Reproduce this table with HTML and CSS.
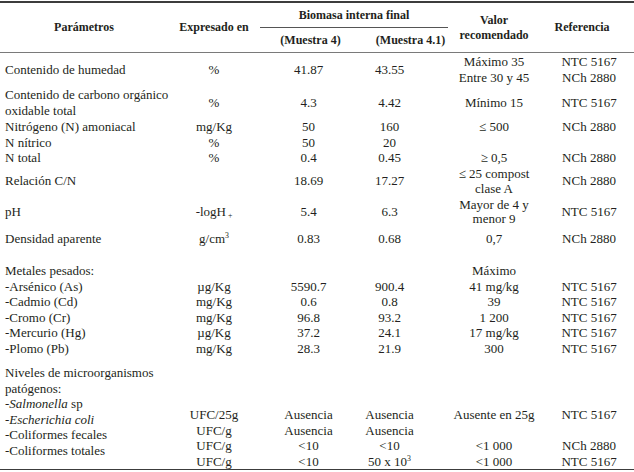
FILE: index.html
```html
<!DOCTYPE html>
<html lang="es">
<head>
<meta charset="utf-8">
<title>Tabla</title>
<link rel="stylesheet" href="styles.css">
</head>
<body>
<table class="tbl">
  <colgroup>
    <col class="c1"><col class="c2"><col class="c3"><col class="c4"><col class="c5"><col class="c6">
  </colgroup>
  <thead>
    <tr class="h1">
      <th rowspan="2" class="hp">Parámetros</th>
      <th rowspan="2">Expresado en</th>
      <th colspan="2" class="hbio">Biomasa interna final</th>
      <th rowspan="2" class="hval">Valor<br>recomendado</th>
      <th rowspan="2" class="href">Referencia</th>
    </tr>
    <tr class="h2">
      <th class="hm4">(Muestra 4)</th>
      <th class="hm41">(Muestra 4.1)</th>
    </tr>
  </thead>
  <tbody>
    <tr class="r2l">
      <td class="lbl">Contenido de humedad</td><td>%</td><td class="m4">41.87</td><td class="m41">43.55</td>
      <td class="val">Máximo 35<br>Entre 30 y 45</td><td class="ref">NTC 5167<br>NCh 2880</td>
    </tr>
    <tr class="r2l">
      <td class="lbl">Contenido de carbono orgánico<br>oxidable total</td><td>%</td><td class="m4">4.3</td><td class="m41">4.42</td>
      <td class="val">Mínimo 15</td><td class="ref">NTC 5167</td>
    </tr>
    <tr class="r1l">
      <td class="lbl">Nitrógeno (N) amoniacal</td><td>mg/Kg</td><td class="m4">50</td><td class="m41">160</td>
      <td class="val">≤ 500</td><td class="ref">NCh 2880</td>
    </tr>
    <tr class="r1l">
      <td class="lbl">N nítrico</td><td>%</td><td class="m4">50</td><td class="m41">20</td>
      <td class="val"></td><td class="ref"></td>
    </tr>
    <tr class="r1l">
      <td class="lbl">N total</td><td>%</td><td class="m4">0.4</td><td class="m41">0.45</td>
      <td class="val">≥ 0,5</td><td class="ref">NCh 2880</td>
    </tr>
    <tr class="tight">
      <td class="lbl">Relación C/N</td><td></td><td class="m4">18.69</td><td class="m41">17.27</td>
      <td class="val">≤ 25 compost<br>clase A</td><td class="ref">NCh 2880</td>
    </tr>
    <tr class="tighter">
      <td class="lbl">pH</td><td>-logH<sub>+</sub></td><td class="m4">5.4</td><td class="m41">6.3</td>
      <td class="val">Mayor de 4 y<br>menor 9</td><td class="ref">NTC 5167</td>
    </tr>
    <tr class="r1l dens">
      <td class="lbl">Densidad aparente</td><td>g/cm<sup>3</sup></td><td class="m4">0.83</td><td class="m41">0.68</td>
      <td class="val">0,7</td><td class="ref">NCh 2880</td>
    </tr>
    <tr class="r1l metal">
      <td class="lbl">Metales pesados:</td><td></td><td></td><td></td>
      <td class="val">Máximo</td><td class="ref"></td>
    </tr>
    <tr class="r1l">
      <td class="lbl">-Arsénico (As)</td><td>µg/Kg</td><td class="m4">5590.7</td><td class="m41">900.4</td>
      <td class="val">41 mg/kg</td><td class="ref">NTC 5167</td>
    </tr>
    <tr class="r1l">
      <td class="lbl">-Cadmio (Cd)</td><td>mg/Kg</td><td class="m4">0.6</td><td class="m41">0.8</td>
      <td class="val">39</td><td class="ref">NTC 5167</td>
    </tr>
    <tr class="r1l">
      <td class="lbl">-Cromo (Cr)</td><td>mg/Kg</td><td class="m4">96.8</td><td class="m41">93.2</td>
      <td class="val">1 200</td><td class="ref">NTC 5167</td>
    </tr>
    <tr class="r1l">
      <td class="lbl">-Mercurio (Hg)</td><td>µg/Kg</td><td class="m4">37.2</td><td class="m41">24.1</td>
      <td class="val">17 mg/kg</td><td class="ref">NTC 5167</td>
    </tr>
    <tr class="r1l">
      <td class="lbl">-Plomo (Pb)</td><td>mg/Kg</td><td class="m4">28.3</td><td class="m41">21.9</td>
      <td class="val">300</td><td class="ref">NTC 5167</td>
    </tr>
    <tr class="micro">
      <td class="lbl">Niveles de microorganismos<br>patógenos:<br>-<i>Salmonella</i> sp<br>-<i>Escherichia coli</i><br>-Coliformes fecales<br>-Coliformes totales</td>
      <td class="off">UFC/25g<br>UFC/g<br>UFC/g<br>UFC/g</td>
      <td class="m4 off">Ausencia<br>Ausencia<br>&lt;10<br>&lt;10</td>
      <td class="m41 off">Ausencia<br>Ausencia<br>&lt;10<br>50 x 10<sup>3</sup></td>
      <td class="val off">Ausente en 25g<br>&nbsp;<br>&lt;1 000<br>&lt;1 000</td>
      <td class="ref off">NTC 5167<br>&nbsp;<br>NCh 2880<br>NTC 5167</td>
    </tr>
  </tbody>
</table>
</body>
</html>
```

FILE: styles.css
```css
html, body {
  margin: 0;
  padding: 0;
  background: #ffffff;
}

body {
  font-family: "Liberation Serif", "Times New Roman", serif;
  font-size: 13px;
  color: #231f20;
}

.tbl {
  width: 634px;
  border-collapse: collapse;
  table-layout: fixed;
  border-top: 2px solid #3c3c3c;
  border-bottom: 1.5px solid #3c3c3c;
  margin-top: 1px;
}

.c1 { width: 168px; }
.c2 { width: 92px; }
.c3 { width: 97px; }
.c4 { width: 91px; }
.c5 { width: 92px; }
.c6 { width: 94px; }

th {
  font-weight: bold;
  font-size: 12px;
  line-height: 15px;
  text-align: center;
  vertical-align: middle;
  padding: 0;
}

thead {
  border-bottom: 1.5px solid #7a7a7a;
}

.h1 th { height: 24px; }
.h2 th { height: 24px; }

.hbio {
  border-bottom: 1px solid #555555;
}

.hm4 { padding-left: 4px; }
.hm41 { padding-left: 16px; }
.href { padding-right: 10px; }

td {
  padding: 0;
  text-align: center;
  vertical-align: middle;
  line-height: 15.5px;
  white-space: nowrap;
}

td.lbl {
  text-align: left;
  padding-left: 5px;
}

td.m41 { padding-right: 26px; }
td.ref { padding-left: 4px; }

.r1l td { line-height: 15.5px; }

.r2l td {
  line-height: 16px;
  padding-top: 0.5px;
  padding-bottom: 0.5px;
}

.tight td { line-height: 15px; }

.tighter td {
  line-height: 14px;
  padding-top: 2px;
}

.dens td {
  padding-top: 5.75px;
  padding-bottom: 5.75px;
}

.metal td { padding-top: 10.75px; }

.micro td {
  vertical-align: top;
  padding-top: 9px;
}

.micro td.off {
  padding-top: 51px;
}

sub, sup {
  font-size: 0.6em;
  line-height: 0;
}

sub { vertical-align: -0.3em; margin-left: 2px; }
sup { vertical-align: 0.6em; }
```
